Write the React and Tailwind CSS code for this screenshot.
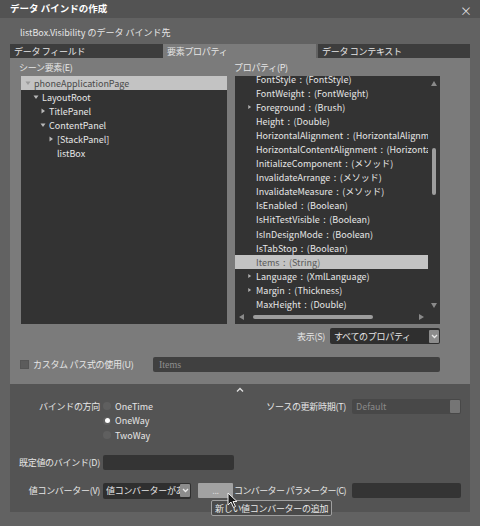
import React from 'react';

const tree = [
  { label: 'phoneApplicationPage', indent: 0, arrow: 'down', selected: true },
  { label: 'LayoutRoot', indent: 1, arrow: 'down' },
  { label: 'TitlePanel', indent: 2, arrow: 'right' },
  { label: 'ContentPanel', indent: 2, arrow: 'down' },
  { label: '[StackPanel]', indent: 3, arrow: 'right' },
  { label: 'listBox', indent: 3, arrow: null },
];

const props = [
  { label: 'FontStyle : (FontStyle)' },
  { label: 'FontWeight : (FontWeight)' },
  { label: 'Foreground : (Brush)', arrow: true },
  { label: 'Height : (Double)' },
  { label: 'HorizontalAlignment : (HorizontalAlignment)' },
  { label: 'HorizontalContentAlignment : (HorizontalAlignment)' },
  { label: 'InitializeComponent : (メソッド)' },
  { label: 'InvalidateArrange : (メソッド)' },
  { label: 'InvalidateMeasure : (メソッド)' },
  { label: 'IsEnabled : (Boolean)' },
  { label: 'IsHitTestVisible : (Boolean)' },
  { label: 'IsInDesignMode : (Boolean)' },
  { label: 'IsTabStop : (Boolean)' },
  { label: 'Items : (String)', selected: true },
  { label: 'Language : (XmlLanguage)', arrow: true },
  { label: 'Margin : (Thickness)', arrow: true },
  { label: 'MaxHeight : (Double)' },
];

const indents = ['pl-[4px]', 'pl-[12px]', 'pl-[19px]', 'pl-[27px]'];

function Tri({ dir, className = '' }) {
  return (
    <svg width="6" height="6" viewBox="0 0 6 6" className={className}>
      {dir === 'down' ? (
        <polygon points="0.5,1.5 5.5,1.5 3,5" fill="currentColor" />
      ) : (
        <polygon points="1.5,0.5 5,3 1.5,5.5" fill="currentColor" />
      )}
    </svg>
  );
}

function Chevron() {
  return (
    <svg width="7" height="5" viewBox="0 0 7 5">
      <polyline points="1,1 3.5,3.5 6,1" fill="none" stroke="#e8e8e8" strokeWidth="1.3" />
    </svg>
  );
}

function Radio({ checked, label }) {
  return (
    <div className="flex items-center h-[14.5px] gap-[4px]">
      <div className="w-[8px] h-[8px] rounded-full bg-[#5f5f5f] flex items-center justify-center">
        {checked && <div className="w-[5px] h-[5px] rounded-full bg-white" />}
      </div>
      <span>{label}</span>
    </div>
  );
}

export default function App() {
  return (
    <div className="relative w-[480px] h-[526px] bg-[#5f5f5f] text-[#e6e6e6] text-[9px] leading-none font-['Noto_Sans_CJK_JP','Noto_Sans',sans-serif] overflow-hidden flex flex-col whitespace-nowrap">
      {/* Title bar */}
      <div className="h-[18px] bg-[#535353] flex items-center justify-between pl-[10px] pr-[8px]">
        <span className="text-[9.5px] font-bold text-white">データ バインドの作成</span>
        <span className="text-[12px] text-[#dcdcdc] mt-[4px]">×</span>
      </div>

      {/* Subtitle */}
      <div className="h-[26px] pl-[20px] pt-[2px] flex items-center bg-[#626262]">
        <span>listBox.Visibility のデータ バインド先</span>
      </div>

      <div className="flex-1 px-[10px] bg-[#626262]">
        {/* Tabs */}
        <div className="grid grid-cols-[153px_153px_154px] h-[14px] tracking-[-0.3px]">
          <div className="bg-[#3d3d3d] flex items-center pl-[4px]">データ フィールド</div>
          <div className="bg-[#7b7b7b] flex items-center pl-[4px]">要素プロパティ</div>
          <div className="bg-[#3d3d3d] flex items-center pl-[4px] ml-[2px]">データ コンテキスト</div>
        </div>

        {/* Main panel */}
        <div className="bg-[#7b7b7b] h-[326px] pl-[11px] pr-[30px] pt-[5px] flex flex-col">
          <div className="flex gap-[8px]">
            {/* Scene elements */}
            <div className="w-[206px] flex flex-col">
              <div className="h-[13px] -ml-[2px] tracking-[-0.3px]">シーン要素(E)</div>
              <div className="h-[248px] bg-[#333333]">
                {tree.map((t) => (
                  <div
                    key={t.label}
                    className={`h-[14.1px] flex items-center gap-[3px] ${indents[t.indent]} ${t.selected ? 'bg-[#c3c3c3] text-[#4a4a4a]' : ''}`}
                  >
                    <span className="w-[6px] shrink-0 flex items-center text-[#b8b8b8]">
                      {t.arrow && <Tri dir={t.arrow} className={t.selected ? 'text-[#9a9a9a]' : ''} />}
                    </span>
                    <span>{t.label}</span>
                  </div>
                ))}
              </div>
            </div>

            {/* Properties */}
            <div className="w-[205px] flex flex-col">
              <div className="h-[13px] -ml-[1px] tracking-[-0.3px]">プロパティ(P)</div>
              <div className="h-[248px] bg-[#333333] flex flex-col">
                <div className="flex h-[236px]">
                  <div className="flex-1 overflow-hidden">
                    <div className="-mt-[4px]">
                      {props.map((p) => (
                        <div
                          key={p.label}
                          className={`h-[14.1px] flex items-center pl-[12px] gap-[4px] ${p.selected ? 'bg-[#c3c3c3] text-[#5a5a5a]' : ''}`}
                        >
                          <span className="w-[5px] shrink-0 flex items-center text-[#b0b0b0]">
                            {p.arrow && <Tri dir="right" />}
                          </span>
                          <span className="[word-spacing:1.5px]">{p.label}</span>
                        </div>
                      ))}
                    </div>
                  </div>
                  {/* vertical scrollbar */}
                  <div className="w-[12px] shrink-0 flex flex-col items-center pt-[5px] pb-[4px]">
                    <svg width="6" height="5" viewBox="0 0 6 5"><polygon points="0,5 6,5 3,0" fill="#8a8a8a" /></svg>
                    <div className="w-[4px] h-[47px] mt-[62px] rounded-full bg-[#9d9d9d]" />
                    <div className="flex-1" />
                    <svg width="6" height="5" viewBox="0 0 6 5"><polygon points="0,0 6,0 3,5" fill="#8a8a8a" /></svg>
                  </div>
                </div>
                {/* horizontal scrollbar */}
                <div className="h-[10px] flex items-center pl-[4px] pr-[16px]">
                  <svg width="5" height="6" viewBox="0 0 5 6"><polygon points="5,0 5,6 0,3" fill="#8a8a8a" /></svg>
                  <div className="w-[120px] h-[4px] ml-[9px] rounded-full bg-[#9d9d9d]" />
                  <div className="flex-1" />
                  <svg width="5" height="6" viewBox="0 0 5 6"><polygon points="0,0 0,6 5,3" fill="#8a8a8a" /></svg>
                </div>
              </div>
            </div>
          </div>

          {/* Display dropdown */}
          <div className="flex justify-end items-center mt-[4px] gap-[5px] tracking-[-0.3px]">
            <span>表示(S)</span>
            <div className="w-[110px] h-[16px] bg-[#2f2f2f] rounded-[2px] flex items-center pl-[4px] pr-[1px]">
              <span className="flex-1">すべてのプロパティ</span>
              <div className="w-[10px] h-[13px] bg-[#8c8c8c] rounded-[1px] flex items-center justify-center">
                <Chevron />
              </div>
            </div>
          </div>

          {/* Custom path */}
          <div className="flex items-center mt-[13px]">
            <div className="w-[9px] h-[9px] bg-[#5c5c5c] border border-[#555] -ml-[1px]" />
            <span className="ml-[4px] tracking-[-0.3px]">カスタム パス式の使用(U)</span>
            <div className="flex-1" />
            <div className="w-[287px] h-[15px] bg-[#404040] rounded-[2px] flex items-center pl-[6px]">
              <span className="text-[#8e8e8e] font-['Liberation_Serif',serif] text-[10px]">Items</span>
            </div>
          </div>
        </div>

        {/* Binding options */}
        <div className="h-[128px] bg-[#545454] flex flex-col">
          <div className="h-[10px] flex justify-center items-center">
            <svg width="8" height="5" viewBox="0 0 8 5">
              <polyline points="1,4.5 4,1.5 7,4.5" fill="none" stroke="#e0e0e0" strokeWidth="1.4" />
            </svg>
          </div>

          <div className="flex mt-[5px]">
            <div className="w-[90px] h-[14.5px] flex items-center justify-end tracking-[-0.3px]">バインドの方向</div>
            <div className="ml-[3px] flex flex-col w-[150px]">
              <Radio label="OneTime" />
              <Radio label="OneWay" checked />
              <Radio label="TwoWay" />
            </div>
            <div className="flex-1 flex justify-end items-start gap-[6px] pr-[9px]">
              <span className="h-[15px] flex items-center tracking-[-0.3px]">ソースの更新時期(T)</span>
              <div className="w-[109px] h-[15px] bg-[#484848] rounded-[2px] flex items-center pl-[4px] pr-[1px]">
                <span className="flex-1 text-[#8a8a8a]">Default</span>
                <div className="w-[10px] h-[13px] bg-[#757575] rounded-[1px]" />
              </div>
            </div>
          </div>

          <div className="flex items-center mt-[12px]">
            <div className="w-[90px] flex justify-end tracking-[-0.3px]">既定値のバインド(D)</div>
            <div className="ml-[3px] w-[131px] h-[15px] bg-[#343434] rounded-[2px]" />
          </div>

          <div className="flex items-center mt-[13px] tracking-[-0.3px]">
            <div className="w-[90px] flex justify-end">値コンバーター(V)</div>
            <div className="ml-[3px] w-[88px] h-[16px] bg-[#2f2f2f] rounded-[2px] flex items-center pl-[3px] pr-[1px]">
              <span className="flex-1 overflow-hidden">値コンバーターがあ</span>
              <div className="w-[10px] h-[13px] shrink-0 bg-[#8c8c8c] rounded-[1px] flex items-center justify-center">
                <Chevron />
              </div>
            </div>
            <div className="ml-[7px] w-[35px] h-[15px] bg-[#a2a2a2] rounded-[1px] flex items-center justify-center text-[#d8d8d8] text-[9px]">...</div>
            <span className="ml-[1px] flex-1 tracking-[-0.6px]">コンバーター パラメーター(C)</span>
            <div className="w-[109px] h-[15px] mr-[9px] bg-[#343434] rounded-[2px]" />
          </div>
        </div>
      </div>

      {/* Tooltip */}
      <div className="absolute left-[211px] top-[500px] h-[16px] px-[3px] bg-[#4a4a4a] border border-[#a0a0a0] rounded-[2px] flex items-center text-[#e8e8e8] tracking-[-0.3px]">
        新しい値コンバーターの追加
      </div>

      {/* Cursor */}
      <svg className="absolute left-[227px] top-[492px]" width="11" height="17" viewBox="0 0 11 17">
        <polygon points="1,1 1,13 4,10 6.5,15.5 8.5,14.5 6,9.5 10,9.5" fill="#1a1a1a" stroke="#f0f0f0" strokeWidth="1" />
      </svg>
    </div>
  );
}
